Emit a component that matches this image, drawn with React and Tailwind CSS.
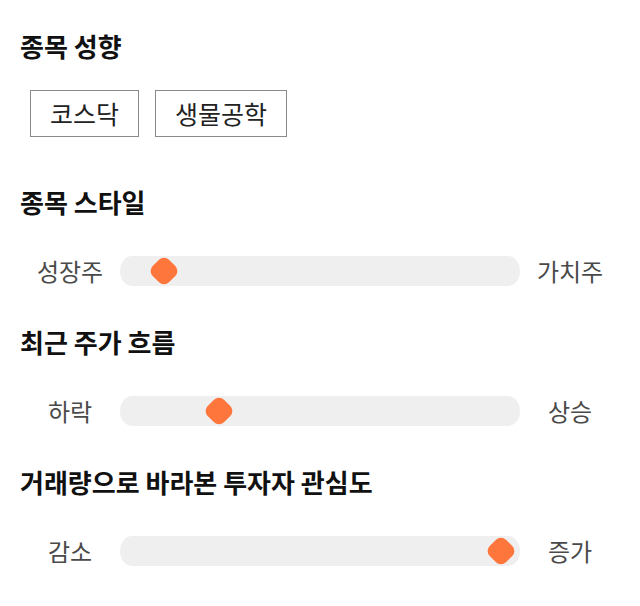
const font = { fontFamily: '"Noto Sans CJK KR", "Noto Sans", sans-serif' };

const sliders = [
  { title: "종목 스타일", left: "성장주", right: "가치주", pos: 10.9, mt: "mt-[49px]" },
  { title: "최근 주가 흐름", left: "하락", right: "상승", pos: 24.7, mt: "mt-[40px]" },
  { title: "거래량으로 바라본 투자자 관심도", left: "감소", right: "증가", pos: 95.3, mt: "mt-[40px]" },
];

function Slider({ left, right, pos }) {
  return (
    <div className="flex items-center h-[30px]">
      <div className="w-[100px] text-center text-[24px] text-[#4a4a4a]">{left}</div>
      <div className="relative flex-1 h-[30px] bg-[#efefef] rounded-[12px/15px]">
        <div
          className="absolute top-1/2 w-[23px] h-[23px] -translate-x-1/2 -translate-y-1/2 rotate-45 rounded-[7px] bg-[#ff763d]"
          style={{ left: `${pos}%` }}
        />
      </div>
      <div className="w-[100px] text-center text-[24px] text-[#4a4a4a]">{right}</div>
    </div>
  );
}

export default function App() {
  return (
    <div className="w-[640px] h-[606px] bg-white px-5 pt-[30px]" style={font}>
      <h2 className="text-[26px] leading-[32px] font-bold text-[#111]">종목 성향</h2>
      <div className="flex gap-4 ml-[10px] mt-[28px]">
        {["코스닥", "생물공학"].map((t) => (
          <div
            key={t}
            className="h-[47px] px-[19px] flex items-center border border-[#8a8a8a] text-[25px] text-[#222]"
          >
            {t}
          </div>
        ))}
      </div>
      {sliders.map((s) => (
        <div key={s.title} className={s.mt}>
          <h2 className="text-[26px] leading-[32px] font-bold text-[#111]">{s.title}</h2>
          <div className="mt-[38px]">
            <Slider left={s.left} right={s.right} pos={s.pos} />
          </div>
        </div>
      ))}
    </div>
  );
}
